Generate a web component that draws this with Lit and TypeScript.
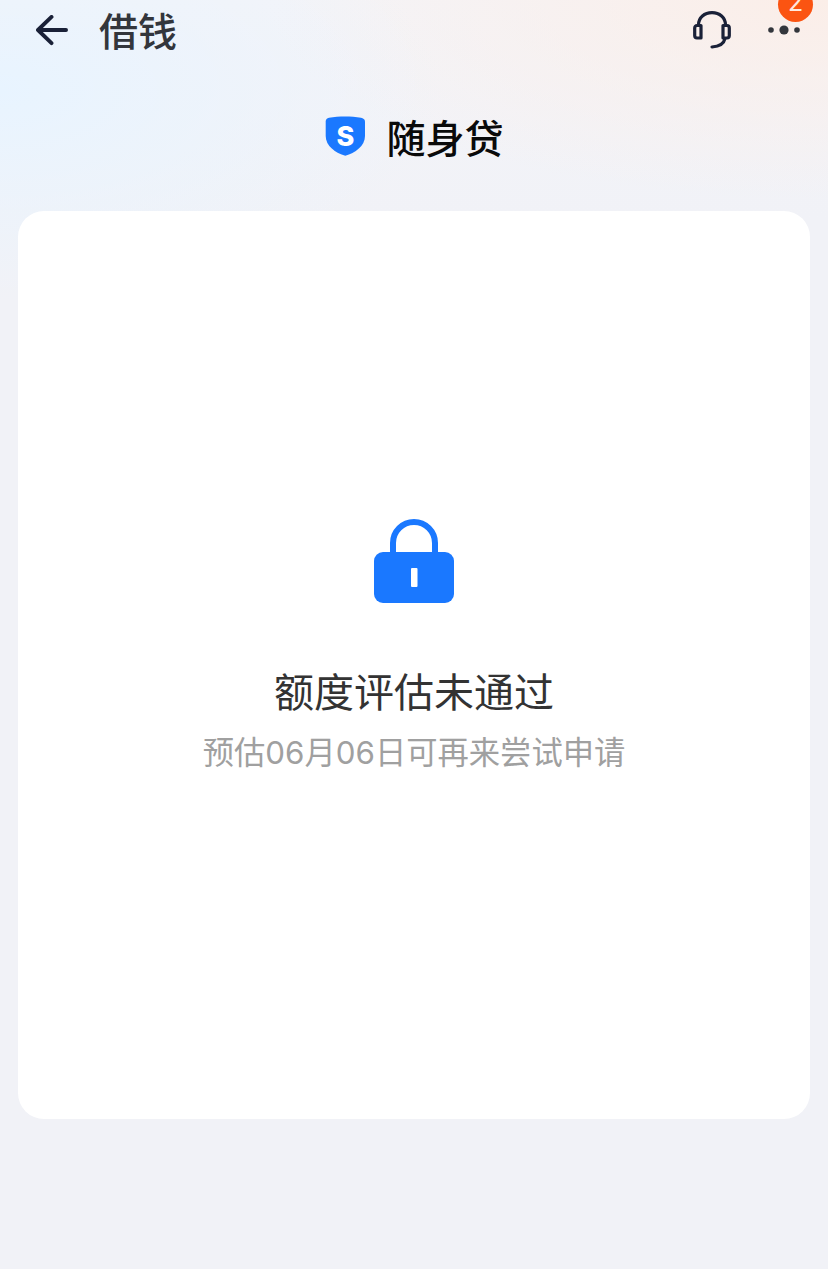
import { LitElement, html, css } from 'lit';
import { customElement } from 'lit/decorators.js';

@customElement('app-root')
export class AppRoot extends LitElement {
    static styles = css`
        :host {
            display: block;
            width: 828px;
            height: 1269px;
            overflow: hidden;
            font-family: 'Noto Sans CJK SC', sans-serif;
            background:
                radial-gradient(ellipse 440px 210px at 0px 90px, #e8f4ff 0%, rgba(232, 244, 255, 0) 100%),
                radial-gradient(ellipse 560px 200px at 828px 0px, #fbeee8 0%, rgba(251, 238, 232, 0) 100%),
                linear-gradient(180deg, #f4f4f8 0%, #f1f2f7 220px);
        }

        .nav {
            height: 60px;
            display: flex;
            align-items: center;
            padding: 0 18px 0 36px;
        }

        .back {
            display: block;
            width: 32px;
            height: 31px;
        }

        .title {
            margin-left: 31px;
            padding-bottom: 2px;
            font-size: 39px;
            line-height: 58px;
            font-weight: 500;
            color: #33363c;
            flex: 1;
        }

        .actions {
            display: flex;
            align-items: center;
            gap: 36px;
            padding-right: 9px;
        }

        .headset {
            display: block;
            width: 38px;
            height: 38px;
        }

        .more {
            position: relative;
            display: block;
            width: 34px;
            height: 10px;
        }

        .badge {
            position: absolute;
            left: 11px;
            top: -38px;
            width: 35px;
            height: 35px;
            border-radius: 50%;
            background: #fb5412;
            color: #ffe9df;
            font-size: 25px;
            line-height: 30px;
            text-align: center;
            font-family: 'Inter', sans-serif;
        }

        .brand {
            display: flex;
            justify-content: center;
            align-items: center;
            gap: 21px;
            height: 64px;
            margin-top: 44px;
            padding-left: 1px;
        }

        .shield {
            display: block;
            width: 40px;
            height: 40px;
        }

        .brand-name {
            font-size: 39px;
            line-height: 64px;
            font-weight: 500;
            color: #0a0a0a;
        }

        .card {
            margin: 43px 18px 0;
            height: 908px;
            border-radius: 26px;
            background: #fff;
            padding-top: 308px;
            box-sizing: border-box;
            display: flex;
            flex-direction: column;
            align-items: center;
        }

        .lock {
            display: block;
            width: 80px;
            height: 84px;
        }

        .result {
            margin-top: 58px;
            font-size: 40px;
            line-height: 58px;
            font-weight: 400;
            color: #333;
        }

        .hint {
            margin-top: 11px;
            font-family: 'Inter', 'Noto Sans CJK SC', sans-serif;
            font-size: 31.3px;
            line-height: 46px;
            color: #a0a0a0;
        }
    `;

    override render() {
        return html`
            <div class="nav">
                <svg class="back" viewBox="0 0 33 32" fill="none" stroke="#1a2138" stroke-width="4" stroke-linecap="round" stroke-linejoin="round">
                    <path d="M31 15.5H3M16 2 2 15.5 16 29"></path>
                </svg>
                <div class="title">借钱</div>
                <div class="actions">
                    <svg class="headset" viewBox="0 0 38 38" fill="none" stroke="#1a2138" stroke-width="3.2" stroke-linecap="round" stroke-linejoin="round">
                        <path d="M5.5 14C5.5 6.5 11.5 1.7 19 1.7S32.5 6.5 32.5 14"></path>
                        <path d="M8 14.5H4C2.6 14.5 1.7 15.6 1.7 17V24.5C1.7 25.9 2.6 27 4 27H8Z"></path>
                        <path d="M30 14.5H34C35.4 14.5 36.3 15.6 36.3 17V24.5C36.3 25.9 35.4 27 34 27H30Z"></path>
                        <path d="M32 27.5C31 32.5 26 35.5 19 36"></path>
                    </svg>
                    <div class="more">
                        <svg class="more" viewBox="0 0 34 10">
                            <circle cx="4" cy="5" r="2.8" fill="#33363c"></circle>
                            <circle cx="17" cy="5" r="4.6" fill="#33363c"></circle>
                            <circle cx="30" cy="5" r="2.8" fill="#33363c"></circle>
                        </svg>
                        <div class="badge">2</div>
                    </div>
                </div>
            </div>
            <div class="brand">
                <svg class="shield" viewBox="0 0 40 40">
                    <path d="M0.7 5.5C0.7 3.5 2 2.2 4 1.8 14 0 26 0 36 1.8 38 2.2 40 3.5 40 5.5V20C40 30 30 37 20.3 39.7 10.5 37 0.7 30 0.7 20Z" fill="#1a78ff"></path>
                    <text x="20.3" y="29.5" text-anchor="middle" font-family="Inter, sans-serif" font-size="27" font-weight="800" fill="#fff">S</text>
                </svg>
                <div class="brand-name">随身贷</div>
            </div>
            <div class="card">
                <svg class="lock" viewBox="0 0 80 84" fill="none">
                    <path d="M19 36V24A21 21 0 0 1 61 24V36" stroke="#1a78ff" stroke-width="6"></path>
                    <rect x="0" y="33" width="80" height="51" rx="9" fill="#1a78ff"></rect>
                    <rect x="37" y="49" width="6.5" height="19" rx="1" fill="#fff"></rect>
                </svg>
                <div class="result">额度评估未通过</div>
                <div class="hint">预估06月06日可再来尝试申请</div>
            </div>
        `;
    }
}
